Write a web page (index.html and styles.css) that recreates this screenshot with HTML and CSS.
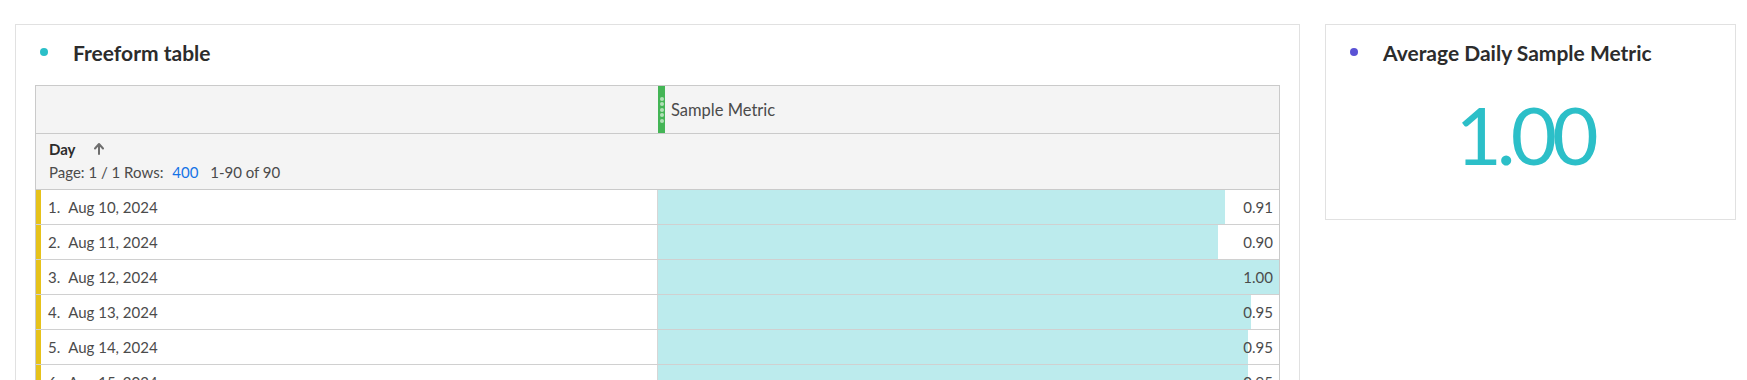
FILE: index.html
```html
<!DOCTYPE html>
<html lang="en">
<head>
  <meta charset="UTF-8">
  <meta name="viewport" content="width=device-width, initial-scale=1.0">
  <title>Workspace</title>
  <link rel="stylesheet" href="styles.css">
</head>
<body>
  <div class="dashboard">
    <section class="panel panelTable">
      <div class="panelHead">
        <span class="dot dotTeal"></span>
        <h2>Freeform table</h2>
      </div>

      <div class="freeform">
        <div class="headRow">
          <div class="headCell"></div>
          <div class="headCell metricHead">
            <span class="grip"><i></i><i></i><i></i><i></i><i></i></span>
            <span>Sample Metric</span>
          </div>
        </div>

        <div class="dimRow">
          <div class="dimName">
            Day
            <svg class="sortIcon" width="10" height="12" viewBox="0 0 10 12">
              <path d="M5 1 L1 5.5 M5 1 L9 5.5 M5 1 V11" stroke="#6e6e6e" stroke-width="2" fill="none" stroke-linecap="round"/>
            </svg>
          </div>
          <div class="pager">
            Page: 1 / 1 Rows: <a class="rowsLink">400</a> <span>1-90 of 90</span>
          </div>
        </div>

        <div class="dataRow">
          <div class="dimCell"><span class="num">1.</span>Aug 10, 2024</div>
          <div class="metricCell" style="--pct: 91.3%">0.91</div>
        </div>
        <div class="dataRow">
          <div class="dimCell"><span class="num">2.</span>Aug 11, 2024</div>
          <div class="metricCell" style="--pct: 90.2%">0.90</div>
        </div>
        <div class="dataRow">
          <div class="dimCell"><span class="num">3.</span>Aug 12, 2024</div>
          <div class="metricCell" style="--pct: 100%">1.00</div>
        </div>
        <div class="dataRow">
          <div class="dimCell"><span class="num">4.</span>Aug 13, 2024</div>
          <div class="metricCell" style="--pct: 95.5%">0.95</div>
        </div>
        <div class="dataRow">
          <div class="dimCell"><span class="num">5.</span>Aug 14, 2024</div>
          <div class="metricCell" style="--pct: 95%">0.95</div>
        </div>
        <div class="dataRow">
          <div class="dimCell"><span class="num">6.</span>Aug 15, 2024</div>
          <div class="metricCell" style="--pct: 95%">0.95</div>
        </div>
      </div>
    </section>

    <section class="panel panelSummary">
      <div class="panelHead">
        <span class="dot dotPurple"></span>
        <h2>Average Daily Sample Metric</h2>
      </div>
      <div class="bigValue">1.00</div>
    </section>
  </div>
</body>
</html>
```

FILE: styles.css
```css
html,
body {
  margin: 0;
  height: 380px;
  overflow: hidden;
  background: #fff;
  font-family: Lato, "Liberation Sans", sans-serif;
  color: #4b4b4b;
}
.dashboard {
  display: flex;
  align-items: flex-start;
  gap: 25px;
  padding: 24px 0 0 15px;
}
.panel {
  box-sizing: border-box;
  border: 1px solid #e1e1e1;
  background: #fff;
}
.panelTable {
  width: 1285px;
  padding: 0 19px 20px;
}
.panelSummary {
  width: 411px;
  height: 196px;
}
.panelHead {
  display: flex;
  align-items: center;
  height: 54px;
  padding-left: 24px;
}
.panelTable .panelHead {
  padding-left: 5px;
  margin-bottom: 6px;
}
.panelHead h2 {
  margin: 0;
  font-size: 21px;
  font-weight: 700;
  color: #2c2c2c;
}
.dot {
  width: 8px;
  height: 8px;
  border-radius: 50%;
  margin-right: 25px;
}
.dotTeal {
  background: #2bbfc8;
}
.dotPurple {
  background: #5a52d5;
}
.bigValue {
  margin-top: 15px;
  padding-right: 12px;
  font-size: 80px;
  line-height: 80px;
  font-weight: 400;
  letter-spacing: -5px;
  text-align: center;
  color: #2cbfc8;
}

/* freeform table */
.freeform {
  border: 1px solid #cacaca;
  font-size: 15px;
}
.headRow,
.dataRow {
  display: grid;
  grid-template-columns: 621px 1fr;
}
.headRow {
  height: 47px;
  background: #f4f4f4;
  border-bottom: 1px solid #cacaca;
}
.metricHead {
  display: flex;
  align-items: center;
  gap: 6px;
  padding-left: 1px;
  font-size: 16.5px;
}
.grip {
  display: flex;
  flex-direction: column;
  align-items: center;
  justify-content: center;
  gap: 1.5px;
  width: 7px;
  height: 100%;
  background: #44b556;
}
.grip i {
  width: 4px;
  height: 4px;
  border-radius: 50%;
  background: #b0e0b6;
}
.dimRow {
  box-sizing: border-box;
  height: 56px;
  padding: 4px 13px 0;
  background: #f4f4f4;
  border-bottom: 1px solid #cacaca;
}
.dimName {
  display: flex;
  align-items: center;
  gap: 18px;
  height: 22px;
  font-weight: 700;
  color: #2c2c2c;
}
.pager {
  margin-top: 3px;
}
.rowsLink {
  color: #1473e6;
  margin: 0 8px 0 5px;
}
.dataRow {
  height: 35px;
  border-bottom: 1px solid #d0d0d0;
  box-sizing: border-box;
}
.dimCell {
  display: flex;
  align-items: center;
  padding-left: 7px;
  border-left: 5px solid #e6c21a;
  color: #4b4b4b;
}
.num {
  margin-right: 8px;
}
.metricCell {
  display: flex;
  align-items: center;
  justify-content: flex-end;
  padding-right: 6px;
  border-left: 1px solid #d6d6d6;
  background: linear-gradient(to right, #bcebed var(--pct), #fff 0);
}
```
